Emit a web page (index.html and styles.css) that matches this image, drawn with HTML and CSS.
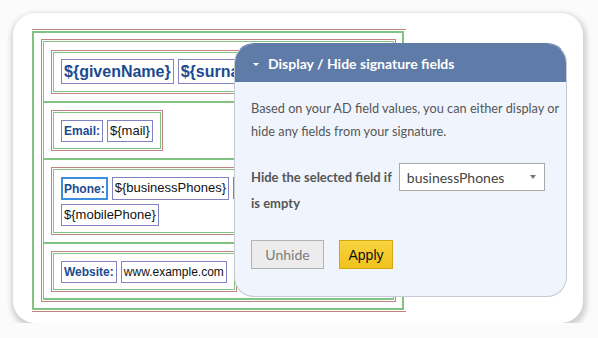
FILE: index.html
```html
<!DOCTYPE html>
<html lang="en">
<head>
  <meta charset="UTF-8">
  <title>Display / Hide signature fields</title>
  <link rel="stylesheet" href="styles.css">
</head>
<body>
  <div class="card">
    <div class="sig">
      <div class="sig-frame">
        <div class="sig-table">
          <div class="sig-rows">

            <div class="row row-first">
              <div class="cell">
                <div class="cell-in">
                  <span class="f f-lg">${givenName}</span>
                  <span class="f f-lg">${surname}</span>
                </div>
              </div>
            </div>

            <div class="row">
              <div class="cell">
                <div class="cell-in">
                  <span class="f f-label">Email:</span>
                  <span class="f">${mail}</span>
                </div>
              </div>
            </div>

            <div class="row">
              <div class="cell">
                <div class="cell-in cell-wrap">
                  <span class="f f-label f-selected">Phone:</span>
                  <span class="f">${businessPhones}</span>
                  <span class="f f-stub"></span>
                  <span class="f">${mobilePhone}</span>
                </div>
              </div>
            </div>

            <div class="row row-last">
              <div class="cell">
                <div class="cell-in">
                  <span class="f f-label">Website:</span>
                  <span class="f f-sm">www.example.com</span>
                </div>
              </div>
            </div>

          </div>
        </div>
      </div>
    </div>

    <div class="popup">
      <div class="popup-head">
        <span class="caret"></span>
        <span>Display / Hide signature fields</span>
      </div>
      <div class="popup-body">
        <p class="intro">Based on your AD field values, you can either display or hide any fields from your signature.</p>
        <div class="cond">
          <span>Hide the selected field if</span>
          <span class="select"><span>businessPhones</span><span class="select-caret"></span></span>
        </div>
        <div class="cond-end">is empty</div>
        <div class="actions">
          <button class="btn btn-unhide">Unhide</button>
          <button class="btn btn-apply">Apply</button>
        </div>
      </div>
    </div>
  </div>
</body>
</html>
```

FILE: styles.css
```css
:root {
  --sig-red: #c08282;
  --sig-green: #82c282;
  --field: #8282c2;
  --label: #1b4b8f;
  --head: #5f7ba7;
  --panel: #f0f5fd;
  --text: #565656;
}

* {
  box-sizing: border-box;
}

body {
  margin: 0;
  background-color: #fbfbfb;
  font-family: "Liberation Sans", Arial, sans-serif;
}

.card {
  position: relative;
  width: 570px;
  height: 310px;
  margin: 13px 0 0 13px;
  padding: 16px 0 0 19px;
  background-color: #fff;
  border-radius: 22px;
  box-shadow: 1px 3px 5px 3px rgba(0, 0, 0, 0.16);
}

/* signature table */

.sig {
  width: 374px;
  padding: 1px 2px 1px 0;
  border-top: 1px solid var(--sig-red);
  border-bottom: 1px solid var(--sig-red);
}

.sig-frame {
  padding: 6px 6px 6px 7px;
  border: 2px solid var(--sig-green);
}

.sig-table {
  padding: 1px;
  border: 1px solid var(--sig-red);
}

.sig-rows {
  border: 1px solid var(--sig-green);
  border-bottom-width: 2px;
  overflow: hidden;
}

.row {
  display: flex;
  align-items: flex-start;
  padding: 7px;
}

.row + .row {
  border-top: 2px solid var(--sig-green);
}

.row-first {
  padding-top: 8px;
}

.row-last {
  padding-bottom: 6px;
}

.cell {
  flex-shrink: 0;
  padding: 1px;
  border: 1px solid var(--sig-red);
}

.cell-in {
  display: flex;
  flex-wrap: wrap;
  gap: 4px;
  padding: 7px 7px 6px;
  border: 1px solid var(--sig-green);
}

.row-first .cell-in {
  padding: 6px 7px 7px;
  flex-wrap: nowrap;
}

.cell-wrap {
  width: 290px;
}

.f {
  padding: 1px 2px;
  border: 1px solid var(--field);
  font-size: 13px;
  line-height: 18px;
  color: #111;
  white-space: nowrap;
}

.f-lg {
  line-height: 21px;
  font-size: 16px;
  font-weight: bold;
  color: var(--label);
}

.f-label {
  font-size: 12px;
  font-weight: bold;
  color: var(--label);
}

.f-sm {
  font-size: 12px;
}

.f-selected {
  padding: 1px 1px 0;
  border: 2px solid #3c8fe0;
}

/* field sitting under the popup, only its edge shows */
.f-stub {
  width: 40px;
  height: 22px;
}

/* popup */

.popup {
  position: absolute;
  left: 221px;
  top: 30px;
  width: 333px;
  height: 254px;
  border: 1px solid #c5cbd5;
  border-top-color: var(--head);
  border-radius: 20px;
  background-color: var(--panel);
  overflow: hidden;
  font-family: Lato, "Open Sans", sans-serif;
}

.popup-head {
  display: flex;
  align-items: center;
  gap: 9px;
  height: 38px;
  padding-left: 18px;
  background-color: var(--head);
  color: #fff;
  font-size: 14px;
  font-weight: bold;
}

.caret {
  width: 0;
  height: 0;
  margin-top: 2px;
  border-left: 3px solid transparent;
  border-right: 3px solid transparent;
  border-top: 3px solid #fff;
}

.popup-body {
  padding: 15px 0 0 16px;
  color: var(--text);
  font-size: 13px;
}

.intro {
  margin: 0;
  font-size: 12.75px;
  line-height: 22.5px;
}

.cond {
  display: flex;
  align-items: center;
  gap: 7px;
  margin-top: 21px;
  font-weight: bold;
}

.cond-end {
  font-weight: bold;
  line-height: 24px;
}

.select {
  display: flex;
  align-items: center;
  justify-content: space-between;
  width: 146px;
  height: 28px;
  padding: 0 8px 0 7px;
  border: 1px solid #a9a9a9;
  background-color: #fff;
  color: #444;
  font-size: 14px;
  font-weight: normal;
}

.select-caret {
  width: 0;
  height: 0;
  border-left: 3.5px solid transparent;
  border-right: 3.5px solid transparent;
  border-top: 4px solid #777;
}

.actions {
  display: flex;
  gap: 15px;
  margin-top: 25px;
}

.btn {
  height: 29px;
  padding: 0;
  font-size: 14px;
  cursor: pointer;
}

.btn-unhide {
  width: 73px;
  border: 1px solid #b3b3b3;
  background-color: #ececec;
  color: #7c7c7c;
  font-family: Lato, sans-serif;
}

.btn-apply {
  width: 54px;
  border: 1px solid #d3a612;
  background-image: linear-gradient(#f8d43f, #f0c21b);
  color: #111;
  font-family: "Liberation Sans", Arial, sans-serif;
}
```
